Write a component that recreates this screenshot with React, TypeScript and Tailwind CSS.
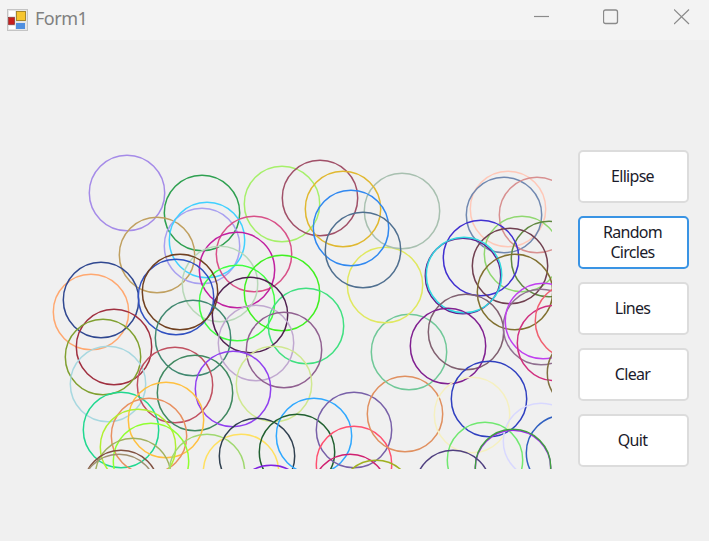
const circles: [number, number, string][] = [
  [127, 193, '#a58be8'], [202, 213, '#2ea050'], [282, 204, '#a6f06a'], [157, 255, '#c0a060'],
  [202, 246, '#a8a0f0'], [207, 240, '#40d0ff'], [254, 254, '#d85088'], [237, 270, '#c020a0'],
  [220, 284, '#b8d8b8'], [237, 303, '#40ff40'], [282, 293, '#40f020'], [306, 326, '#40e080'],
  [250, 315, '#502050'], [91, 312, '#ffa870'], [101, 300, '#304890'], [176, 297, '#3050c0'],
  [180, 292, '#704020'], [193, 338, '#408870'], [114, 347, '#a03040'], [103, 357, '#80a030'],
  [108, 384, '#a8d8e0'], [175, 385, '#c05060'], [195, 393, '#408860'], [256, 343, '#c0a8d0'],
  [284, 350, '#906090'], [274, 384, '#d0e890'], [233, 389, '#9040f0'], [121, 430, '#20d890'],
  [166, 420, '#ffc040'], [149, 436, '#e89060'], [138, 447, '#b0f030'], [151, 461, '#90ff30'],
  [133, 476, '#a0b060'], [121, 488, '#805040'], [119, 492, '#a09070'], [207, 472, '#a0d870'],
  [241, 472, '#ffe060'], [257, 456, '#304050'], [314, 436, '#30a8ff'], [297, 452, '#206030'],
  [271, 503, '#8020e0'], [354, 430, '#7860a8'], [354, 464, '#ff5070'], [350, 492, '#d02070'],
  [376, 498, '#a0b020'], [405, 414, '#e09060'], [409, 352, '#70c898'], [385, 285, '#e0e860'],
  [402, 211, '#a8c0b0'], [320, 198, '#a05068'], [343, 209, '#e0b830'], [351, 228, '#3088f0'],
  [363, 250, '#507090'], [508, 209, '#ffc8b8'], [504, 215, '#7088b0'], [537, 215, '#d89090'],
  [522, 254, '#90d870'], [549, 259, '#608840'], [481, 258, '#4030d0'], [510, 266, '#704050'],
  [463, 276, '#602090'], [464, 275, '#30d8e0'], [515, 292, '#807030'], [466, 332, '#806070'],
  [448, 346, '#802090'], [541, 327, '#907090'], [543, 321, '#c040f0'], [555, 343, '#d03080'],
  [573, 321, '#f06070'], [585, 373, '#807040'], [472, 415, '#f5f0c0'], [489, 399, '#3040c0'],
  [541, 441, '#d8d8ff'], [564, 453, '#3060c0'], [485, 460, '#70e870'], [513, 468, '#a020f0'],
  [513, 467, '#40a040'], [453, 488, '#504080'],
]

const buttons = ['Ellipse', 'Random Circles', 'Lines', 'Clear', 'Quit']

function AppIcon() {
  return (
    <svg width="21" height="22" viewBox="0 0 21 22" className="mr-[7px] shrink-0">
      <rect x="0.5" y="0.5" width="20" height="21" fill="#e6e6e6" stroke="#c4c4c4" />
      <rect x="2" y="2" width="6" height="5" fill="#fff" />
      <rect x="2" y="17" width="6" height="3" fill="#fff" />
      <rect x="1.5" y="8.5" width="6" height="7" fill="#c81e1e" stroke="#8a3030" strokeWidth="0.7" />
      <rect x="9.5" y="2.5" width="9" height="9" fill="#f7c62f" stroke="#a08020" strokeWidth="0.9" />
      <rect x="9" y="14" width="9" height="6" fill="#4f8fe0" />
    </svg>
  )
}

export default function App() {
  return (
    <div className="w-[709px] h-[541px] bg-[#f0f0f0] overflow-hidden font-['Noto_Sans',sans-serif]">
      <div className="h-[40px] bg-[#f3f3f3] flex items-center pl-[7px]">
        <AppIcon />
        <span className="text-[18px] tracking-[-0.5px] text-[#808080] -mt-[3px]">Form1</span>
        <div className="ml-auto flex">
          <svg width="71" height="34" viewBox="0 0 71 34" className="-mt-[6px]">
            <line x1="2" y1="16.5" x2="17" y2="16.5" stroke="#8a8a8a" strokeWidth="1.2" />
          </svg>
          <svg width="71" height="34" viewBox="0 0 71 34" className="-mt-[6px]">
            <rect x="0.5" y="10" width="14" height="13.5" rx="2" fill="none" stroke="#8a8a8a" strokeWidth="1.3" />
          </svg>
          <svg width="35" height="34" viewBox="0 0 35 34" className="-mt-[6px]">
            <path d="M0 9.5 L15 24 M15 9.5 L0 24" fill="none" stroke="#8a8a8a" strokeWidth="1.2" />
          </svg>
        </div>
      </div>
      <div className="flex pl-[40px] pt-[10px]">
        <svg width="512" height="419" viewBox="40 50 512 419" className="shrink-0 blur-[0.3px]">
          {circles.map(([cx, cy, color], i) => (
            <circle key={i} cx={cx} cy={cy} r="37.7" fill="none" stroke={color} strokeWidth="1.5" />
          ))}
        </svg>
        <div className="ml-[26px] mt-[100px] w-[111px] flex flex-col gap-[13px]">
          {buttons.map((label, i) => (
            <button
              key={label}
              className={`h-[53px] px-[14px] pb-[2px] pr-[16px] rounded-[5px] bg-white text-[16px] leading-[20px] tracking-[-0.7px] text-[#1b1b2b] border-2 ${
                i === 1 ? 'border-[#3a94e4]' : 'border-[#dcdcdc]'
              }`}
            >
              {label}
            </button>
          ))}
        </div>
      </div>
    </div>
  )
}
